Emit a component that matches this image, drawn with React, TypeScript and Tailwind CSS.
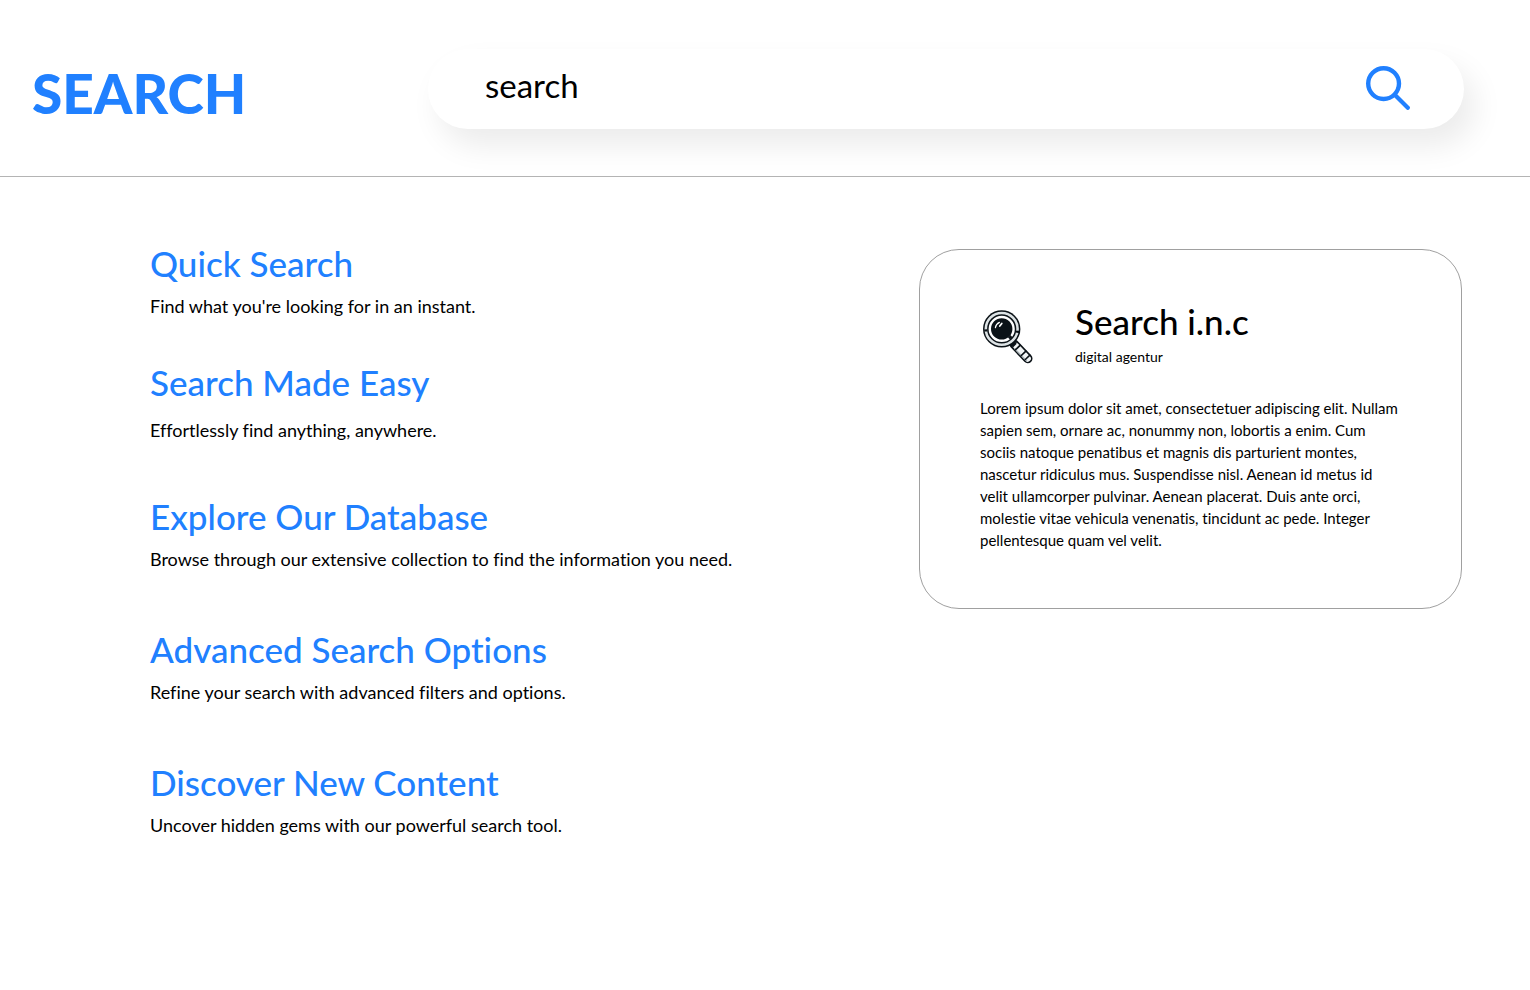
import React from "react";

const results = [
  { title: "Quick Search", text: "Find what you're looking for in an instant.", spacing: "mb-10 gap-[7px]" },
  { title: "Search Made Easy", text: "Effortlessly find anything, anywhere.", spacing: "mb-[50px] gap-3" },
  { title: "Explore Our Database", text: "Browse through our extensive collection to find the information you need.", spacing: "mb-[54px] gap-[7px]" },
  { title: "Advanced Search Options", text: "Refine your search with advanced filters and options.", spacing: "mb-[54px] gap-[7px]" },
  { title: "Discover New Content", text: "Uncover hidden gems with our powerful search tool.", spacing: "gap-[7px]" },
];

const about = [
  "Lorem ipsum dolor sit amet, consectetuer adipiscing elit. Nullam",
  "sapien sem, ornare ac, nonummy non, lobortis a enim. Cum",
  "sociis natoque penatibus et magnis dis parturient montes,",
  "nascetur ridiculus mus. Suspendisse nisl. Aenean id metus id",
  "velit ullamcorper pulvinar. Aenean placerat. Duis ante orci,",
  "molestie vitae vehicula venenatis, tincidunt ac pede. Integer",
  "pellentesque quam vel velit.",
];

function SearchIcon() {
  return (
    <svg viewBox="0 0 44 44" className="size-11" fill="none" stroke="#2080ff" aria-hidden="true">
      <circle cx="17.6" cy="17.6" r="15.4" strokeWidth="4.4" />
      <path d="M29.5 29.5 L41.8 41.8" strokeWidth="4.2" strokeLinecap="round" />
    </svg>
  );
}

function AgencyLogo() {
  return (
    <svg viewBox="0 0 50 54" className="h-[54px] w-[50px] shrink-0" aria-hidden="true">
      <g fill="none">
        <path d="M31 34 L44.8 48.6" stroke="#0b1217" strokeWidth="9.4" strokeLinecap="round" />
        <path d="M33 36 L44.8 48.6" stroke="#f1f4f5" strokeWidth="6.2" strokeLinecap="round" />
        <path d="M31.5 38.5 L44 51.2" stroke="#aab3b7" strokeWidth="1.2" />
        <path d="M37.6 34.8 L32 40.2 M43.4 40.6 L37.8 46" stroke="#0b1217" strokeWidth="1.7" />
        <path d="M47.4 44.6 L41.8 50" stroke="#0b1217" strokeWidth="1.5" />
        <path d="M28.6 32 L32 35.4" stroke="#0b1217" strokeWidth="5" />
      </g>
      <circle cx="18.7" cy="18.9" r="18.7" fill="#0b1217" />
      <circle cx="18.7" cy="18.9" r="15.9" fill="none" stroke="#dde3e5" strokeWidth="2.6" />
      <circle cx="18.7" cy="18.9" r="11.9" fill="none" stroke="#ffffff" strokeWidth="2.4" />
      <path d="M1.2 20.5 L4.4 20.3 M33 21.5 L36.4 22.2" stroke="#0b1217" strokeWidth="2.2" />
      <path d="M26 28.5 L28.4 26.2" stroke="#0b1217" strokeWidth="3" />
      <path d="M12.4 17.6 Q12.8 14.2 16.4 12.4" stroke="#ffffff" strokeWidth="1.2" strokeLinecap="round" fill="none" />
      <path d="M16.8 16 L18.8 13.4" stroke="#ffffff" strokeWidth="1.7" strokeLinecap="round" />
    </svg>
  );
}

export default function App() {
  return (
    <div className="min-h-screen bg-white font-['Lato',sans-serif] text-black [font-variant-ligatures:none]">
      <header className="flex h-[177px] items-start border-b border-[#b4b4b4] pl-8 pr-[66px] pt-[49px]">
        <h1 className="w-[396px] shrink-0 pt-2 text-[55px] font-black leading-[72px] text-[#2080ff]">SEARCH</h1>
        <form
          role="search"
          onSubmit={(e) => e.preventDefault()}
          className="flex h-20 min-w-0 flex-1 items-center rounded-full bg-white pl-[57px] pr-[54px] shadow-[11px_17px_30px_rgba(0,0,0,0.08)]"
        >
          <input
            type="search"
            aria-label="Search"
            placeholder="search"
            className="h-14 min-w-0 flex-1 bg-transparent pb-2 text-[33px] text-black outline-none placeholder:text-black"
          />
          <button type="submit" aria-label="Submit search" className="shrink-0 pb-0.5">
            <SearchIcon />
          </button>
        </form>
      </header>

      <main className="flex items-start justify-between gap-10 pl-[150px] pr-[68px] pt-16">
        <section>
          {results.map((result) => (
            <article key={result.title} className={`flex flex-col ${result.spacing}`}>
              <h2 className="text-[35px] font-medium leading-[44px] text-[#2080ff]">
                <a href="#">{result.title}</a>
              </h2>
              <p className="text-lg leading-7">{result.text}</p>
            </article>
          ))}
        </section>

        <aside className="mt-2 w-[543px] rounded-[40px] border border-[#a0a0a0] px-[60px] pb-[57px] pt-[49px]">
          <div className="flex items-end gap-[42px] pl-[3px]">
            <div className="pb-[3px]">
              <AgencyLogo />
            </div>
            <div>
              <h2 className="text-[35px] font-medium leading-[44px]">Search i.n.c</h2>
              <p className="mt-1 text-sm leading-5">digital agentur</p>
            </div>
          </div>
          <p className="mt-[30px] text-[15px] leading-[22px]">
            {about.map((line) => (
              <span key={line} className="block">
                {line}
              </span>
            ))}
          </p>
        </aside>
      </main>
    </div>
  );
}
